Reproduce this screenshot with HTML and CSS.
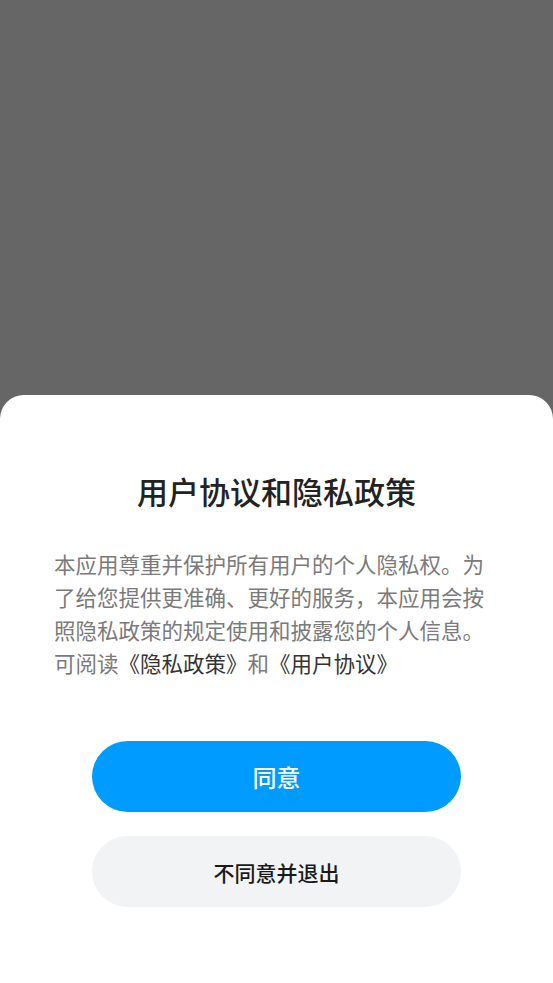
FILE: index.html
```html
<!DOCTYPE html>
<html lang="zh">
<head>
<meta charset="utf-8">
<link rel="stylesheet" href="styles.css">
</head>
<body>
<div class="screen">
  <div class="backdrop"></div>
  <div class="sheet">
    <h1 class="title">用户协议和隐私政策</h1>
    <p class="body">本应用尊重并保护所有用户的个人隐私权。为了给您提供更准确、更好的服务，本应用会按照隐私政策的规定使用和披露您的个人信息。可阅读<span class="link">《隐私政策》</span>和<span class="link">《用户协议》</span></p>
    <div class="actions">
      <button class="btn btn-primary">同意</button>
      <button class="btn btn-secondary">不同意并退出</button>
    </div>
  </div>
</div>
</body>
</html>
```

FILE: styles.css
```css
html, body {
  margin: 0;
  padding: 0;
  width: 553px;
  height: 983px;
  overflow: hidden;
  background: #666666;
  font-family: "Noto Sans CJK SC", "Noto Sans", sans-serif;
}
.screen {
  display: flex;
  flex-direction: column;
  height: 983px;
}
.backdrop {
  height: 395px;
  flex: none;
  background: #666666;
}
.sheet {
  flex: 1;
  background: #ffffff;
  border-radius: 24px 24px 0 0;
  display: flex;
  flex-direction: column;
  align-items: center;
}
.title {
  margin: 74px 0 0;
  font-size: 31px;
  line-height: 44px;
  font-weight: 500;
  color: #222222;
}
.body {
  margin: 34px 0 0;
  width: 445px;
  font-size: 21.5px;
  line-height: 33px;
  color: #7a7a7a;
}
.link {
  color: #333333;
}
.actions {
  margin-top: 62px;
  display: flex;
  flex-direction: column;
  gap: 24px;
}
.btn {
  width: 369px;
  height: 71px;
  border: none;
  border-radius: 36px;
  font-family: inherit;
  display: flex;
  align-items: center;
  justify-content: center;
  padding: 0;
}
.btn-primary {
  background: #009bff;
  color: #ffffff;
  font-size: 24px;
  font-weight: 500;
}
.btn-secondary {
  background: #f2f3f5;
  color: #1a1a1a;
  font-size: 21px;
  font-weight: 500;
}
```
